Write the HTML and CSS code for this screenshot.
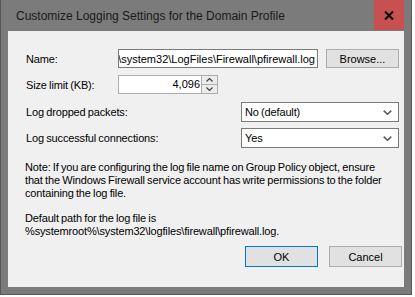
FILE: index.html
```html
<!DOCTYPE html>
<html lang="en">

<head>
    <meta charset="UTF-8" />
    <title>Customize Logging Settings for the Domain Profile</title>
    <link rel="stylesheet" href="styles.css">
</head>

<body>
    <div class="window">
        <!-- Title bar -->
        <header class="titlebar">
            <span class="title">Customize Logging Settings for the Domain Profile</span>
            <div class="close">
                <svg width="10" height="9" viewBox="0 0 10 9">
                    <path d="M1 0.5 L9 8.5 M9 0.5 L1 8.5" stroke="#000" stroke-width="2" fill="none" />
                </svg>
            </div>
        </header>

        <main class="content">
            <div class="row">
                <label class="label">Name:</label>
                <div class="textbox name-box"><span>%systemroot%\system32\LogFiles\Firewall\pfirewall.log</span></div>
                <button class="btn browse">Browse...</button>
            </div>

            <div class="row size-row">
                <label class="label">Size limit (KB):</label>
                <div class="spin">
                    <div class="spin-value">4,096</div>
                    <div class="spin-buttons">
                        <span class="spin-btn">
                            <svg width="7" height="4" viewBox="0 0 7 4">
                                <path d="M0.5 3.5 L3.5 0.5 L6.5 3.5" stroke="#404040" stroke-width="1.2" fill="none" />
                            </svg>
                        </span>
                        <span class="spin-btn">
                            <svg width="7" height="4" viewBox="0 0 7 4">
                                <path d="M0.5 0.5 L3.5 3.5 L6.5 0.5" stroke="#404040" stroke-width="1.2" fill="none" />
                            </svg>
                        </span>
                    </div>
                </div>
            </div>

            <div class="row select-row first-select">
                <label class="label">Log dropped packets:</label>
                <div class="select">
                    <span>No (default)</span>
                    <svg class="chevron" width="9" height="5" viewBox="0 0 9 5">
                        <path d="M0.7 0.7 L4.5 4.3 L8.3 0.7" stroke="#606060" stroke-width="1.6" fill="none" />
                    </svg>
                </div>
            </div>

            <div class="row select-row">
                <label class="label">Log successful connections:</label>
                <div class="select">
                    <span>Yes</span>
                    <svg class="chevron" width="9" height="5" viewBox="0 0 9 5">
                        <path d="M0.7 0.7 L4.5 4.3 L8.3 0.7" stroke="#606060" stroke-width="1.6" fill="none" />
                    </svg>
                </div>
            </div>

            <p class="note">Note: If you are configuring the log file name on Group Policy object, ensure that the Windows Firewall service account has write permissions to the folder containing the log file.</p>

            <p class="note path">Default path for the log file is<br>%systemroot%\system32\logfiles\firewall\pfirewall.log.</p>

            <div class="actions">
                <button class="btn default">OK</button>
                <button class="btn">Cancel</button>
            </div>
        </main>
    </div>
</body>

</html>
```

FILE: styles.css
```css
/* Global */
body {
    margin: 0;
    background: #fff;
    font-family: 'Liberation Sans', Arial, sans-serif;
    font-size: 11px;
    letter-spacing: -0.15px;
    word-spacing: -0.6px;
    color: #000;
}

/* Window frame */
.window {
    width: 412px;
    height: 295px;
    box-sizing: border-box;
    background: #7b7b7b;
    border: 1px solid #585858;
    border-top: none;
    padding: 0 7px 7px;
    display: flex;
    flex-direction: column;
}

.titlebar {
    height: 31px;
    display: flex;
    align-items: center;
}

.title {
    padding-left: 8px;
    font-size: 12px;
    letter-spacing: 0;
    word-spacing: 0;
    color: #1a1a1a;
}

.close {
    margin-left: auto;
    width: 30px;
    height: 30px;
    margin-top: -1px;
    background: #c75050;
    display: flex;
    align-items: center;
    justify-content: center;
}

/* Dialog body */
.content {
    flex: 1;
    background: #f0f0f0;
    padding: 18px 5px 0 18px;
}

.row {
    display: flex;
    align-items: center;
    height: 19px;
}

.label {
    width: 92px;
    flex-shrink: 0;
}

.textbox {
    box-sizing: border-box;
    height: 19px;
    background: #fff;
    border: 1px solid #7a7a7a;
    display: flex;
    align-items: center;
}

.name-box {
    width: 200px;
    overflow: hidden;
    justify-content: flex-end;
    padding-right: 2px;
}

.name-box span {
    white-space: nowrap;
    flex-shrink: 0;
    letter-spacing: 0;
}

.btn {
    box-sizing: border-box;
    width: 73px;
    height: 20px;
    padding: 0;
    background: #e1e1e1;
    border: 1px solid #adadad;
    font-family: inherit;
    font-size: 11px;
    color: #000;
}

.browse {
    margin-left: 8px;
    height: 19px;
}

.default {
    border-color: #0078d7;
}

/* Size spinner */
.size-row {
    margin-top: 7px;
}

.spin {
    display: flex;
    height: 19px;
    box-sizing: border-box;
    border: 1px solid #adadad;
    background: #fff;
}

.spin-value {
    width: 82px;
    text-align: right;
    line-height: 17px;
    padding-right: 1px;
    box-sizing: border-box;
    letter-spacing: 0;
}

.spin-buttons {
    width: 15px;
    display: flex;
    flex-direction: column;
    border-left: 1px solid #adadad;
}

.spin-btn {
    flex: 1;
    background: #ececec;
    display: flex;
    align-items: center;
    justify-content: center;
}

.spin-btn + .spin-btn {
    border-top: 1px solid #adadad;
}

/* Dropdowns */
.select-row {
    height: 20px;
    margin-top: 6px;
}

.first-select {
    margin-top: 8px;
}

.select-row .label {
    width: auto;
}

.select {
    margin-left: auto;
    width: 158px;
    height: 20px;
    box-sizing: border-box;
    border: 1px solid #7a7a7a;
    background: #fff;
    display: flex;
    align-items: center;
    padding: 0 6px 0 3px;
}

.chevron {
    margin-left: auto;
}

/* Notes */
.note {
    width: 366px;
    margin: 13px 0 0 -1px;
    line-height: 13px;
}

.path {
    margin-top: 12px;
}

.actions {
    display: flex;
    justify-content: flex-end;
    gap: 11px;
    margin-top: 8px;
    margin-right: -3px;
}

.actions .btn {
    height: 21px;
}
```
